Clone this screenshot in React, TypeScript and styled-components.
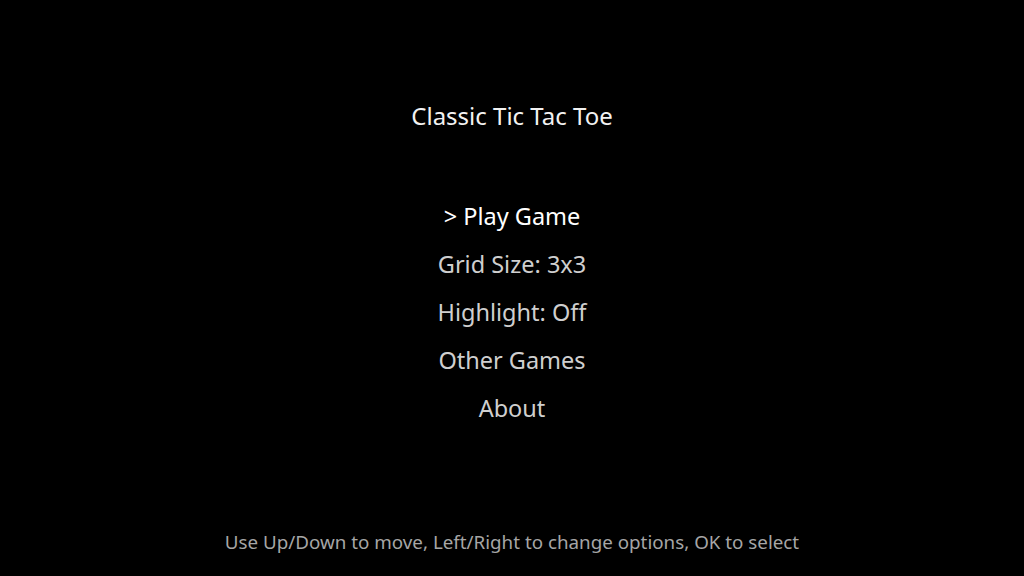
import React from 'react'
import styled, { createGlobalStyle } from 'styled-components'

const Global = createGlobalStyle`
html, body {
  margin: 0;
  padding: 0;
  background: #000;
}
`
const Screen = styled.div`
display: flex;
flex-direction: column;
align-items: center;
height: 576px;
width: 1024px;
background: #000;
font-family: "Noto Sans", "Open Sans", sans-serif;
padding-top: 100px;
padding-bottom: 22px;
box-sizing: border-box;
`
const Title = styled.h1`
margin: 0;
font-size: 24px;
font-weight: 400;
line-height: 32px;
color: #f2f2f2;
`
const Menu = styled.ul`
list-style: none;
margin: 60px 0 0 0;
padding: 0;
display: flex;
flex-direction: column;
align-items: center;
`
const Item = styled.li<{ $active?: boolean }>`
font-size: 23.5px;
line-height: 48px;
color: ${p => (p.$active ? '#ffffff' : '#cfcfcf')};
`
const Hint = styled.p`
margin: auto 0 0 0;
font-size: 18.8px;
line-height: 24px;
color: #a6a6a6;
`

const items = ['Play Game', 'Grid Size: 3x3', 'Highlight: Off', 'Other Games', 'About']

const App = () => {
  const selected = 0
  return (
    <>
      <Global />
      <Screen>
        <Title>Classic Tic Tac Toe</Title>
        <Menu>
          {items.map((label, i) => (
            <Item key={label} $active={i === selected}>
              {i === selected ? `> ${label}` : label}
            </Item>
          ))}
        </Menu>
        <Hint>Use Up/Down to move, Left/Right to change options, OK to select</Hint>
      </Screen>
    </>
  )
}
export default App
